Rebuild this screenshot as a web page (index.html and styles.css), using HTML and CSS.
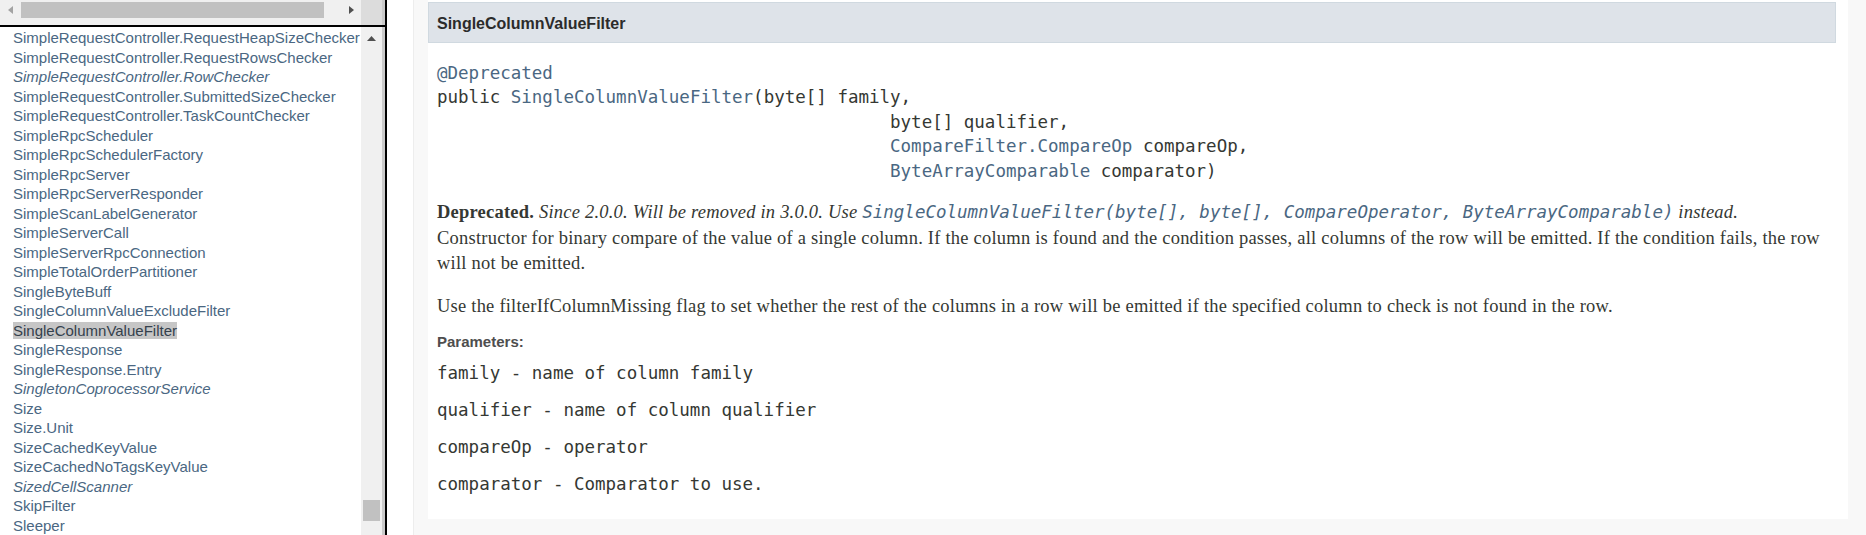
FILE: index.html
```html
<!DOCTYPE html>
<html lang="en">
<head>
<meta charset="utf-8">
<title>SingleColumnValueFilter</title>
<link rel="stylesheet" href="styles.css">
</head>
<body>
<div class="frames">
  <aside class="nav">
    <div class="top-frame">
      <div class="hscroll">
        <svg class="harrow" width="5" height="8" viewBox="0 0 5 8"><polygon points="5,0 5,8 0,4" fill="#a3a3a3"/></svg>
        <div class="hthumb"></div>
        <svg class="harrow harrow-right" width="5" height="8" viewBox="0 0 5 8"><polygon points="0,0 0,8 5,4" fill="#505050"/></svg>
      </div>
      <div class="corner"></div>
      <div class="frame-edge"></div>
    </div>
    <div class="list-frame">
      <ul class="classes">
        <li><a>SimpleRequestController.RequestHeapSizeChecker</a></li>
        <li><a>SimpleRequestController.RequestRowsChecker</a></li>
        <li><a class="iface">SimpleRequestController.RowChecker</a></li>
        <li><a>SimpleRequestController.SubmittedSizeChecker</a></li>
        <li><a>SimpleRequestController.TaskCountChecker</a></li>
        <li><a>SimpleRpcScheduler</a></li>
        <li><a>SimpleRpcSchedulerFactory</a></li>
        <li><a>SimpleRpcServer</a></li>
        <li><a>SimpleRpcServerResponder</a></li>
        <li><a>SimpleScanLabelGenerator</a></li>
        <li><a>SimpleServerCall</a></li>
        <li><a>SimpleServerRpcConnection</a></li>
        <li><a>SimpleTotalOrderPartitioner</a></li>
        <li><a>SingleByteBuff</a></li>
        <li><a>SingleColumnValueExcludeFilter</a></li>
        <li><a class="current">SingleColumnValueFilter</a></li>
        <li><a>SingleResponse</a></li>
        <li><a>SingleResponse.Entry</a></li>
        <li><a class="iface">SingletonCoprocessorService</a></li>
        <li><a>Size</a></li>
        <li><a>Size.Unit</a></li>
        <li><a>SizeCachedKeyValue</a></li>
        <li><a>SizeCachedNoTagsKeyValue</a></li>
        <li><a class="iface">SizedCellScanner</a></li>
        <li><a>SkipFilter</a></li>
        <li><a>Sleeper</a></li>
      </ul>
      <div class="vscroll">
        <svg class="varrow" width="9" height="5" viewBox="0 0 9 5"><polygon points="0,5 9,5 4.5,0" fill="#505050"/></svg>
        <div class="vthumb"></div>
      </div>
      <div class="frame-edge"></div>
    </div>
  </aside>
  <main class="main">
    <div class="member-list">
      <div class="member">
        <h4 class="member-title">SingleColumnValueFilter</h4>
        <div class="signature">
          <div class="sig-line"><a class="link">@Deprecated</a></div>
          <div class="sig-line">public <a class="link">SingleColumnValueFilter</a>(byte[] family,</div>
          <div class="sig-line sig-cont">byte[] qualifier,</div>
          <div class="sig-line sig-cont"><a class="link">CompareFilter.CompareOp</a> compareOp,</div>
          <div class="sig-line sig-cont"><a class="link">ByteArrayComparable</a> comparator)</div>
        </div>
        <div class="block block-deprecated"><span class="deprecated-label">Deprecated.</span>&nbsp;<span class="deprecation-comment">Since 2.0.0. Will be removed in 3.0.0. Use <code class="link">SingleColumnValueFilter(byte[], byte[], CompareOperator, ByteArrayComparable)</code> instead.</span></div>
        <div class="block">Constructor for binary compare of the value of a single column. If the column is found and the condition passes, all columns of the row will be emitted. If the condition fails, the row will not be emitted.
          <p class="para">Use the filterIfColumnMissing flag to set whether the rest of the columns in a row will be emitted if the specified column to check is not found in the row.</p>
        </div>
        <dl class="params">
          <dt class="params-label">Parameters:</dt>
          <dd><code>family</code> - name of column family</dd>
          <dd><code>qualifier</code> - name of column qualifier</dd>
          <dd><code>compareOp</code> - operator</dd>
          <dd><code>comparator</code> - Comparator to use.</dd>
        </dl>
      </div>
    </div>
  </main>
</div>
</body>
</html>
```

FILE: styles.css
```css
html, body {
  margin: 0;
  padding: 0;
  height: 535px;
  overflow: hidden;
  background: #ffffff;
}

.frames {
  display: flex;
  height: 535px;
}

/* ---------- left navigation frames ---------- */
.nav {
  width: 387px;
  flex: none;
  display: flex;
  flex-direction: column;
  font-family: "Liberation Sans", Arial, sans-serif;
}

.top-frame {
  display: flex;
  height: 25px;
  border-bottom: 2px solid #000;
  flex: none;
}

.hscroll {
  width: 361px;
  background: #f0f0f0;
  display: flex;
  align-items: flex-start;
}

.harrow {
  display: block;
  margin-top: 6px;
  margin-left: 8px;
  flex: none;
}

.hthumb {
  width: 303px;
  height: 16px;
  margin-top: 2px;
  margin-left: 8px;
  background: #c1c1c1;
  flex: none;
}

.harrow-right {
  margin-left: 25px;
}

.corner {
  width: 21px;
  background: #dcdcdc;
}

.frame-edge {
  width: 3px;
  background: #cacaca;
  border-right: 2px solid #000;
}

.list-frame {
  flex: 1;
  display: flex;
  min-height: 0;
}

.classes {
  width: 361px;
  margin: 0;
  padding: 1px 0 0 13px;
  box-sizing: border-box;
  list-style: none;
  font-size: 15px;
  line-height: 19.5px;
  white-space: nowrap;
  overflow: hidden;
}

.classes a {
  color: #4a6782;
  text-decoration: none;
}

.classes a.iface {
  font-style: italic;
}

.classes a.current {
  background: #c6c6c6;
  color: #34404c;
}

.vscroll {
  width: 21px;
  background: #f0f0f0;
  display: flex;
  flex-direction: column;
  align-items: center;
}

.varrow {
  display: block;
  margin-top: 9px;
}

.vthumb {
  width: 17px;
  height: 21px;
  margin-top: auto;
  margin-bottom: 14px;
  background: #c1c1c1;
}

/* ---------- main content ---------- */
.main {
  flex: 1;
  min-width: 0;
  background: #ffffff;
  padding-left: 26px;
  display: flex;
  color: #353833;
}

.member-list {
  flex: 1;
  background: #f8f8f8;
  border-left: 1px solid #ededed;
  padding: 0 18px 0 14px;
}

.member {
  background: #ffffff;
  padding: 2px 12px 23px 9px;
}

.member-title {
  margin: 0 0 0 -9px;
  padding: 10.5px 8px 8.5px;
  background: #dee3e9;
  border: 1px solid #d0d9e0;
  font-family: "Liberation Sans", Arial, sans-serif;
  font-size: 16px;
  line-height: 20px;
  font-weight: bold;
  color: #2b2b2b;
}

.signature {
  margin: 17.5px 0 0;
  font-family: "DejaVu Sans Mono", monospace;
  font-size: 17.5px;
  line-height: 24.5px;
  color: #353833;
}

.sig-line {
  white-space: pre;
}

.sig-cont {
  padding-left: 43ch;
}

.link {
  color: #4a6782;
  text-decoration: none;
}

.block {
  font-family: "Liberation Serif", "Times New Roman", serif;
  font-size: 18.5px;
  letter-spacing: 0.22px;
  line-height: 25px;
  margin-top: 1.5px;
}

.block-deprecated {
  margin-top: 16.5px;
}

.deprecated-label {
  font-weight: bold;
}

.deprecation-comment {
  font-style: italic;
}

.block code {
  font-family: "DejaVu Sans Mono", monospace;
  font-size: 17.5px;
  letter-spacing: 0;
}

.para {
  margin: 18px 0 0;
}

.params {
  margin: 13.5px 0 0;
}

.params-label {
  font-family: "Liberation Sans", Arial, sans-serif;
  font-size: 15px;
  line-height: 18px;
  font-weight: bold;
  color: #4e4e4e;
  margin-bottom: 10px;
}

.params dd {
  margin: 0 0 12.5px;
  font-family: "DejaVu Sans Mono", monospace;
  font-size: 17.5px;
  line-height: 24.5px;
}

.params dd:last-child {
  margin-bottom: 0;
}

.params code {
  font-family: inherit;
  font-size: inherit;
}
```
